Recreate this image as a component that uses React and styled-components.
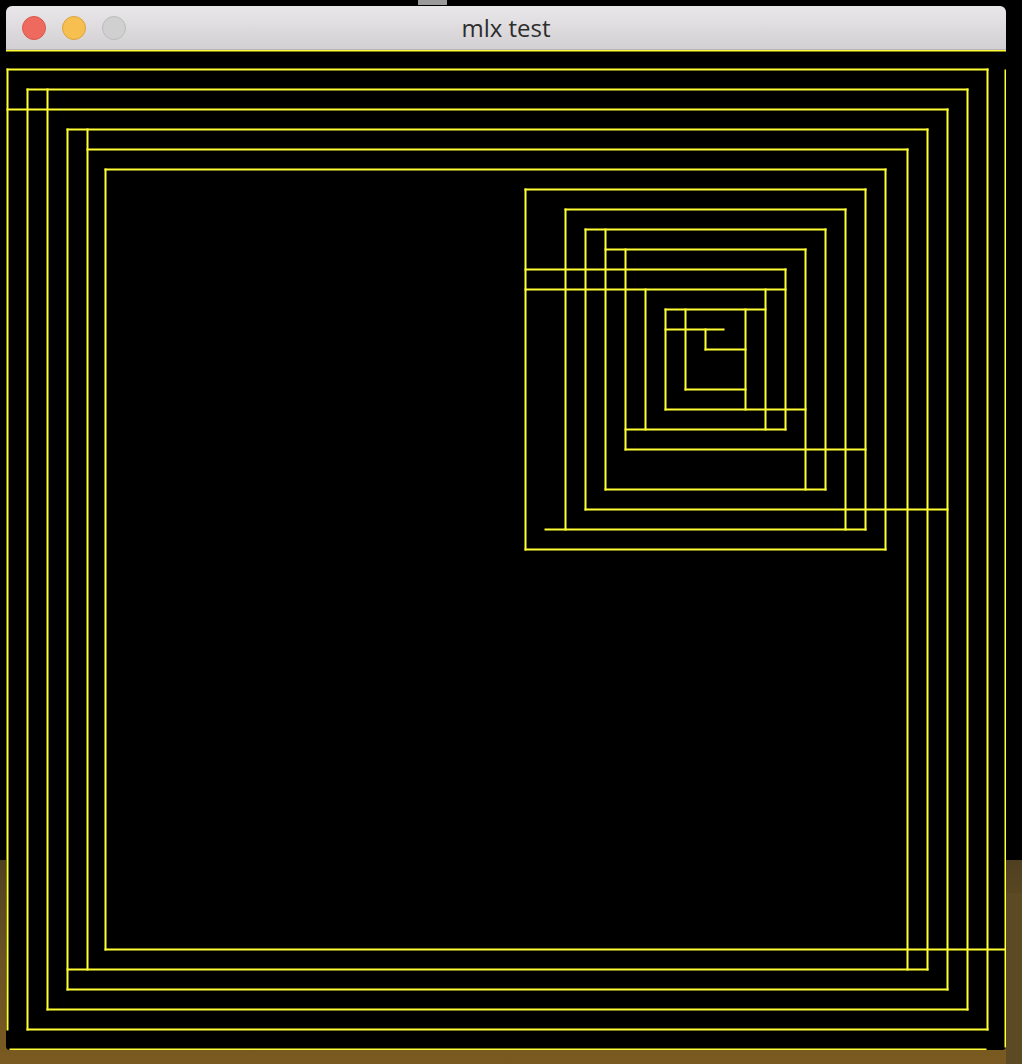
import React from 'react'
import styled, { createGlobalStyle } from 'styled-components'

const GlobalStyle = createGlobalStyle`
    html, body {
        margin: 0;
        padding: 0;
        background: #000;
    }
`

const Screen = styled.div`
    width: 1022px;
    height: 1064px;
    overflow: hidden;
    background:
        linear-gradient(to right, transparent 0 1006px, #5b4a24 1006px) 0 893px / 100% 100% no-repeat,
        linear-gradient(to bottom, #000 0 860px, #4f4020 860px, #6a5224 960px, #7a5a20 1064px);
    display: flex;
    flex-direction: column;
`

const TopStrip = styled.div`
    height: 6px;
    display: flex;
    padding-left: 418px;
`

const Tab = styled.div`
    width: 29px;
    height: 5px;
    background: #9a9a9a;
`

const Window = styled.div`
    margin-left: 6px;
    width: 1000px;
    display: flex;
    flex-direction: column;
`

const TitleBar = styled.div`
    height: 43px;
    border-radius: 6px 6px 0 0;
    background: linear-gradient(to bottom, #e9e7e9, #d2d0d2);
    border-bottom: 1px solid #b5b3b5;
    display: flex;
    align-items: center;
    padding-left: 16px;
    gap: 16px;
    position: relative;
`

const Light = styled.div`
    width: 22px;
    height: 22px;
    border-radius: 50%;
    background: ${props => props.color};
    border: 1px solid ${props => props.edge};
`

const Title = styled.div`
    position: absolute;
    left: 0;
    right: 0;
    top: 0;
    bottom: 0;
    display: flex;
    align-items: center;
    justify-content: center;
    font-family: "Open Sans", "Liberation Sans", sans-serif;
    font-size: 24px;
    color: #2e2d2e;
    pointer-events: none;
`

const Canvas = styled.div`
    width: 1000px;
    height: 1000px;
    background: #000;
    border-radius: 0 0 4px 4px;
    display: flex;
`

const Segment = styled.line`
    stroke: #ffff33;
    stroke-width: 2;
    stroke-linecap: square;
`

// segments in page coordinates: x1, y1, x2, y2
const segments = [
    // frame lines
    [6, 50, 1006, 50],
    [7, 69, 987, 69],
    [7, 69, 7, 1029],
    [987, 69, 987, 1029],
    [27, 1029, 987, 1029],
    [1005, 70, 1005, 1046],
    [10, 1049, 985, 1049],
    [27, 89, 967, 89],
    [27, 89, 27, 1029],
    [47, 89, 47, 1009],
    [967, 89, 967, 1009],
    [47, 1009, 967, 1009],
    [7, 109, 947, 109],
    [947, 109, 947, 989],
    [67, 989, 947, 989],
    [67, 129, 927, 129],
    [67, 129, 67, 989],
    [87, 129, 87, 969],
    [927, 129, 927, 969],
    [67, 969, 927, 969],
    [87, 149, 907, 149],
    [907, 149, 907, 969],
    [105, 169, 885, 169],
    [105, 169, 105, 949],
    [105, 949, 1005, 949],
    [885, 169, 885, 549],
    // spiral
    [665, 329, 723, 329],
    [705, 329, 705, 349],
    [705, 349, 745, 349],
    [745, 309, 745, 409],
    [665, 309, 765, 309],
    [685, 309, 685, 389],
    [685, 389, 745, 389],
    [665, 309, 665, 409],
    [665, 409, 805, 409],
    [765, 289, 765, 429],
    [525, 289, 785, 289],
    [525, 269, 785, 269],
    [785, 269, 785, 429],
    [525, 189, 525, 549],
    [625, 429, 785, 429],
    [645, 289, 645, 429],
    [625, 249, 625, 449],
    [605, 249, 805, 249],
    [805, 249, 805, 489],
    [625, 449, 865, 449],
    [605, 229, 605, 489],
    [605, 489, 825, 489],
    [585, 229, 825, 229],
    [825, 229, 825, 489],
    [585, 229, 585, 509],
    [585, 509, 947, 509],
    [565, 209, 845, 209],
    [845, 209, 845, 529],
    [565, 209, 565, 529],
    [545, 529, 865, 529],
    [525, 189, 865, 189],
    [865, 189, 865, 529],
    [525, 549, 885, 549],
]

const Drawing = () => (
    <svg width="1000" height="1000" viewBox="6 50 1000 1000">
        {segments.map(([x1, y1, x2, y2], i) => (
            <Segment key={i} x1={x1 + 0.5} y1={y1 + 0.5} x2={x2 + 0.5} y2={y2 + 0.5} />
        ))}
    </svg>
)

const App = () => {
    return (
        <Screen>
            <GlobalStyle />
            <TopStrip>
                <Tab />
            </TopStrip>
            <Window>
                <TitleBar>
                    <Light color="#ee6a5f" edge="#d8574c" />
                    <Light color="#f6bf4f" edge="#dba33d" />
                    <Light color="#d0d0d0" edge="#bcbcbc" />
                    <Title>mlx test</Title>
                </TitleBar>
                <Canvas>
                    <Drawing />
                </Canvas>
            </Window>
        </Screen>
    )
}

export default App
